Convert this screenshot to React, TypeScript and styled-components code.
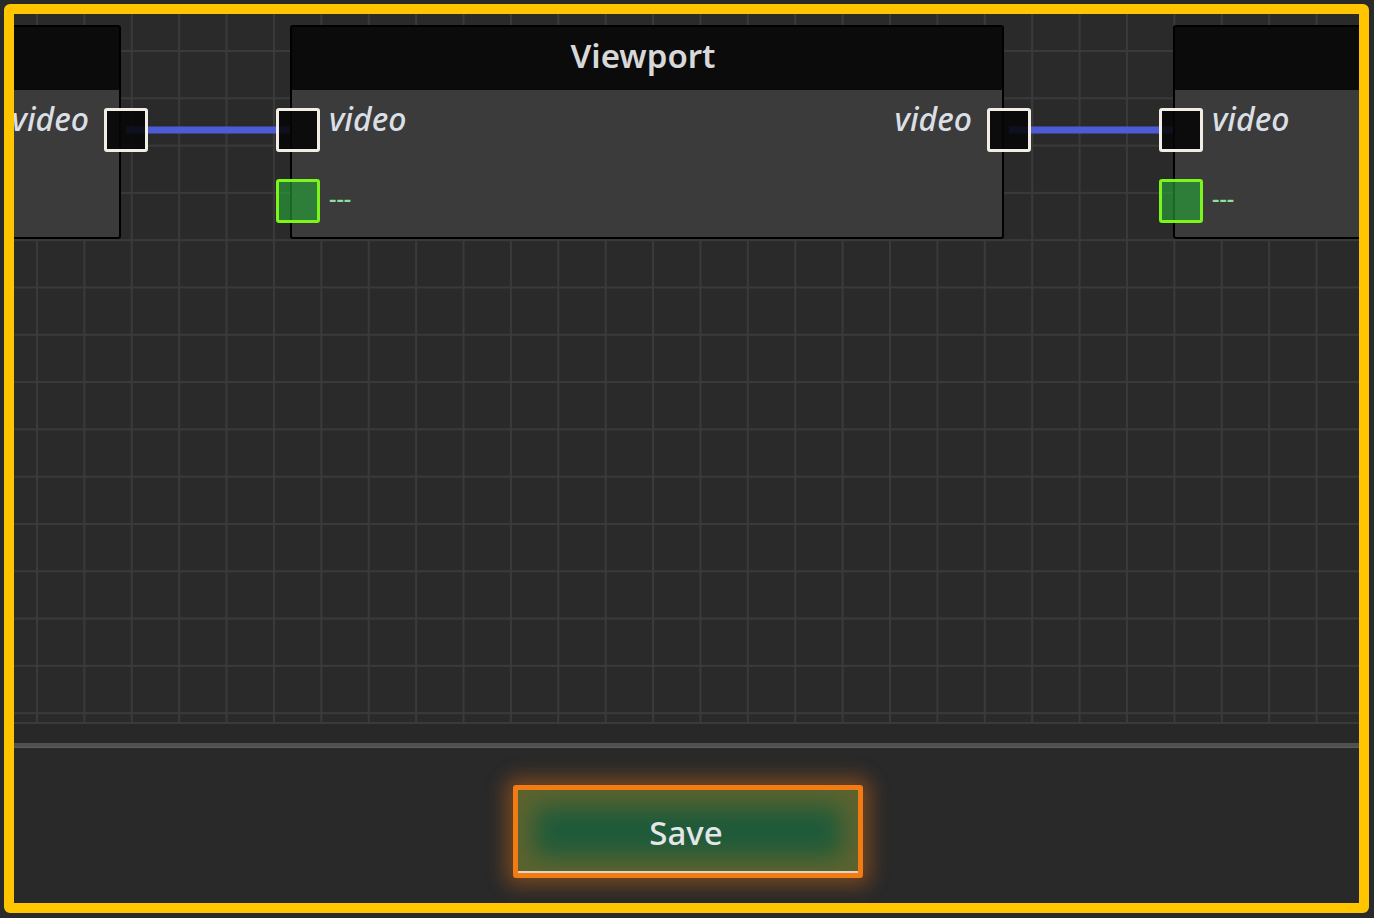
import { styled, createGlobalStyle } from "styled-components";

const GlobalStyle = createGlobalStyle`
    body {
        margin: 0;
        background: #2a2a2a;
        font-family: "Noto Sans", "Open Sans", sans-serif;
    }
`;

const Page = styled.div`
    padding: 4px;
`;

const Frame = styled.div`
    width: 1365px;
    height: 909px;
    box-sizing: border-box;
    border: 10px solid #ffc600;
    border-radius: 6px;
    background: #292929;
    display: flex;
    flex-direction: column;
    overflow: hidden;
`;

const Canvas = styled.div`
    position: relative;
    height: 708px;
    flex: none;
    overflow: hidden;
    border-bottom: 2px solid #3a3a3a;
    background-color: #2a2a2a;
    background-image:
        linear-gradient(to right, #3a3a3a 0 2px, transparent 2px),
        linear-gradient(to bottom, #3a3a3a 0 2px, transparent 2px);
    background-size: 47.4px 100%, 100% 47.3px;
    background-position: 22px 0, 0 36px;
`;

const Edges = styled.svg`
    position: absolute;
    inset: 0;
    width: 100%;
    height: 100%;
    z-index: 0;
`;

const Gutter = styled.div`
    height: 19px;
    flex: none;
    background: #282828;
`;

const Footer = styled.div`
    flex: 1;
    display: flex;
    justify-content: center;
    align-items: flex-start;
    padding-top: 38px;
    border-top: 4px solid #505050;
    box-shadow: inset 0 1px 0 #5c5c5c;
    background: #292929;
`;

const SaveButton = styled.button`
    width: 350px;
    height: 93px;
    margin-left: 3px;
    box-sizing: border-box;
    border: 5px solid #f37b14;
    border-radius: 3px;
    background: #1f5b3a;
    color: #e4e6e8;
    font-family: "Noto Sans", "Open Sans", sans-serif;
    font-size: 33px;
    font-weight: 500;
    padding: 2px 4px 0 0;
    cursor: pointer;
    box-shadow:
        0 0 20px 7px rgba(240, 120, 20, 0.4),
        inset 0 -2px 0 rgba(240, 225, 210, 0.9),
        inset 0 0 24px 16px rgba(240, 120, 20, 0.3);
`;

const NodeBox = styled.div<{ $x: number }>`
    position: absolute;
    top: 11px;
    left: ${(p) => p.$x}px;
    width: 714px;
    height: 214px;
    box-sizing: border-box;
    border: 2px solid #000;
    border-radius: 3px;
    background: #3b3b3b;
    display: flex;
    flex-direction: column;
    z-index: 1;
`;

const Header = styled.div`
    height: 63px;
    flex: none;
    box-sizing: border-box;
    padding: 0 8px 6px 0;
    background: #0b0b0b;
    display: flex;
    align-items: center;
    justify-content: center;
    color: #d8d8d8;
    font-size: 33px;
    font-weight: 600;
`;

const Body = styled.div`
    display: flex;
    flex-direction: column;
    gap: 27px;
    padding-top: 18px;
`;

const Row = styled.div`
    position: relative;
    height: 44px;
    display: flex;
    align-items: center;
`;

const PortBox = styled.div<{ $side: "in" | "out"; $kind: "video" | "flag" }>`
    position: absolute;
    top: 0;
    ${(p) => (p.$side === "in" ? "left: -16px;" : "right: -29px;")}
    width: 44px;
    height: 44px;
    box-sizing: border-box;
    border-radius: 3px;
    border: 3px solid ${(p) => (p.$kind === "video" ? "#f2eee6" : "#7cf51c")};
    background: ${(p) => (p.$kind === "video" ? "rgba(6, 6, 6, 0.88)" : "rgba(38, 168, 58, 0.62)")};
`;

const Label = styled.span<{ $side: "in" | "out"; $kind: "video" | "flag" }>`
    ${(p) => (p.$side === "in" ? "margin-left: 37px;" : "margin-left: auto; margin-right: 30px;")}
    ${(p) =>
        p.$kind === "video"
            ? `
        align-self: flex-start;
        margin-top: -5px;
        font-size: 32px;
        font-weight: 500;
        line-height: 1;
        font-style: italic;
        color: #dadfe5;
    `
            : `
        margin-bottom: 6px;
        font-size: 23px;
        font-weight: 500;
        color: #8ee09a;
    `}
`;

type Port = { label: string; kind: "video" | "flag" };
type NodeRow = { input?: Port; output?: Port };
type NodeData = { id: string; x: number; title: string; rows: NodeRow[] };

const video: Port = { label: "video", kind: "video" };
const flag: Port = { label: "---", kind: "flag" };

const nodes: NodeData[] = [
    { id: "source", x: -607, title: "", rows: [{ output: video }, {}] },
    { id: "viewport", x: 276, title: "Viewport", rows: [{ input: video, output: video }, { input: flag }] },
    { id: "next", x: 1159, title: "", rows: [{ input: video }, { input: flag }] },
];

// port centres in canvas coordinates
const edges = [
    { x1: 112, x2: 284, y: 116 },
    { x1: 995, x2: 1167, y: 116 },
];

function GraphNode({ node }: { node: NodeData }) {
    return (
        <NodeBox $x={node.x}>
            <Header>{node.title}</Header>
            <Body>
                {node.rows.map((row, i) => (
                    <Row key={i}>
                        {row.input ? (
                            <>
                                <PortBox $side="in" $kind={row.input.kind} />
                                <Label $side="in" $kind={row.input.kind}>{row.input.label}</Label>
                            </>
                        ) : null}
                        {row.output ? (
                            <>
                                <Label $side="out" $kind={row.output.kind}>{row.output.label}</Label>
                                <PortBox $side="out" $kind={row.output.kind} />
                            </>
                        ) : null}
                    </Row>
                ))}
            </Body>
        </NodeBox>
    );
}

export default function App() {
    return (
        <>
            <GlobalStyle />
            <Page>
                <Frame>
                    <Canvas>
                        <Edges>
                            {edges.map((e, i) => (
                                <line key={i} x1={e.x1} x2={e.x2} y1={e.y} y2={e.y} stroke="#4d5cd6" strokeWidth={7} />
                            ))}
                        </Edges>
                        {nodes.map((n) => (
                            <GraphNode key={n.id} node={n} />
                        ))}
                    </Canvas>
                    <Gutter />
                    <Footer>
                        <SaveButton>Save</SaveButton>
                    </Footer>
                </Frame>
            </Page>
        </>
    );
}
